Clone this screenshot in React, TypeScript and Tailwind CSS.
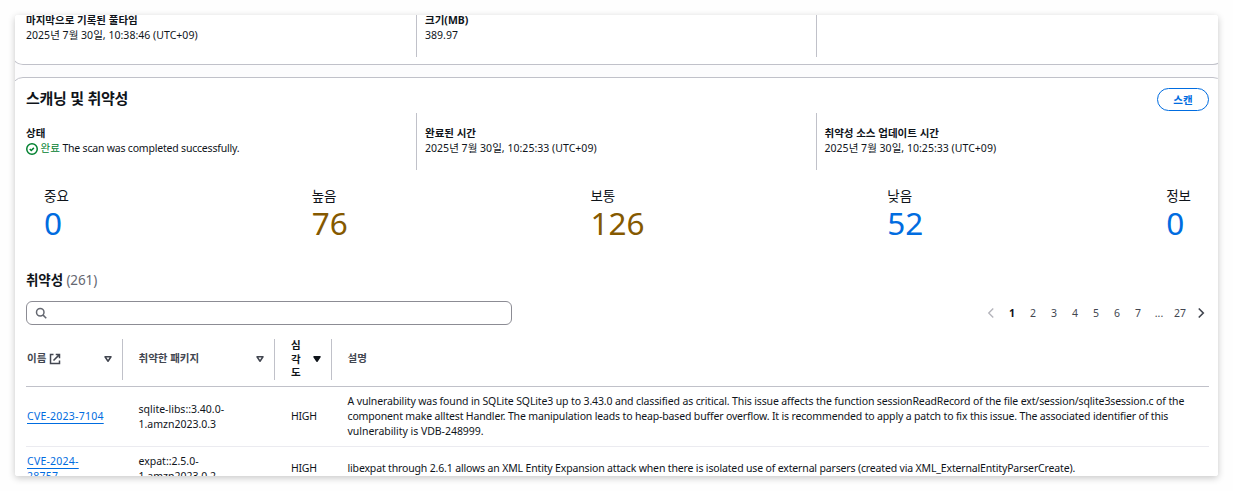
import type { ReactNode } from "react";

function Field({ label, children }: { label: string; children?: ReactNode }) {
  return (
    <div>
      <div className="h-[15px] whitespace-nowrap font-bold">{label}</div>
      <div className="flex h-[15px] items-center whitespace-nowrap tracking-[0.03px]">{children}</div>
    </div>
  );
}

function Stat({ label, value, color }: { label: string; value: string; color: string }) {
  return (
    <div>
      <div className="h-[17px] text-[13.5px] leading-[17px]">{label}</div>
      <div className={`h-[38px] text-[31.5px] leading-[36px] ${color}`}>{value}</div>
    </div>
  );
}

function CheckIcon() {
  return (
    <svg width="12" height="12" viewBox="0 0 16 16" fill="none" stroke="#00802f" strokeWidth="2" className="mr-[2.5px] shrink-0">
      <circle cx="8" cy="8" r="7" />
      <path d="m5 8 2 2 3.5-3.5" />
    </svg>
  );
}

function SearchIcon() {
  return (
    <svg width="12" height="12" viewBox="0 0 16 16" fill="none" stroke="#656871" strokeWidth="2">
      <circle cx="7" cy="7" r="5" />
      <path d="m15 15-4.5-4.5" />
    </svg>
  );
}

function ExternalIcon() {
  return (
    <svg width="12" height="12" viewBox="0 0 16 16" fill="none" stroke="#424650" strokeWidth="2" className="ml-[3px]">
      <path d="M6 2H2v12h12v-4" />
      <path d="M9 2h5v5M6 10l7.5-7.5" />
    </svg>
  );
}

function Caret({ filled }: { filled?: boolean }) {
  return (
    <svg width="12" height="12" viewBox="0 0 16 16" fill={filled ? "#0f141a" : "none"} stroke={filled ? "#0f141a" : "#424650"} strokeWidth="2" strokeLinejoin="round">
      <path d="M4 5h8l-4 6z" />
    </svg>
  );
}

function Chevron({ left }: { left?: boolean }) {
  return (
    <svg width="12" height="12" viewBox="0 0 16 16" fill="none" stroke={left ? "#b4b4bb" : "#424650"} strokeWidth={left ? 1.8 : 2.2}>
      <path d={left ? "m11 2-6 6 6 6" : "m5 2 6 6-6 6"} />
    </svg>
  );
}

const link = "text-[#006ce0] tracking-[0.24px] underline decoration-1 underline-offset-[3px]";
const columns = "grid grid-cols-[97px_152px_57px_1fr]";

export default function App() {
  return (
    <div className="h-[491px] w-[1233px] overflow-hidden bg-[#fefefe] pl-[15px] pt-[15px] font-['Noto_Sans','Noto_Sans_CJK_KR',sans-serif] text-[10.5px] leading-[15px] text-[#0f141a]">
      <div className="h-[461px] w-[1203px] rounded-[3px] shadow-[0_2px_7px_rgba(0,0,0,0.22)]">
        <div className="h-full overflow-hidden rounded-[3px] bg-[#fcfcfd]">
          <section className="-ml-1 -mr-[7px] h-[50px] rounded-b-xl border border-t-0 border-[#c0c1c9] bg-white pl-[14px] pr-[15px]">
            <div className="grid h-[42px] grid-cols-[390px_400px_1fr]">
              <div className="-mt-[2px]">
                <Field label="마지막으로 기록된 풀타임">2025년 7월 30일, 10:38:46 (UTC+09)</Field>
              </div>
              <div className="border-l border-[#c0c1c9] pl-2">
                <div className="-mt-[2px]">
                  <Field label="크기(MB)">389.97</Field>
                </div>
              </div>
              <div className="border-l border-[#c0c1c9]" />
            </div>
          </section>

          <section className="-ml-1 -mr-[7px] mt-3 h-[420px] rounded-t-xl border border-[#c0c1c9] bg-white pl-[14px] pr-[15px]">
            <header className="flex h-[35px] items-start justify-between pt-[10px]">
              <h2 className="text-[15px] font-bold leading-[20px] tracking-[-0.25px]">스캐닝 및 취약성</h2>
              <button className="h-[23px] w-[52px] rounded-full border border-[#006ce0] font-bold leading-[20px] text-[#006ce0]">
                스캔
              </button>
            </header>

            <div className="grid h-[57px] grid-cols-[390px_400px_1fr]">
              <div className="pt-[13px]">
                <Field label="상태">
                  <CheckIcon />
                  <span className="mr-[2.5px] text-[#00802f]">완료</span>
                  <span className="tracking-[-0.2px]">The scan was completed successfully.</span>
                </Field>
              </div>
              <div className="border-l border-[#c0c1c9] pl-2 pt-[13px]">
                <Field label="완료된 시간">2025년 7월 30일, 10:25:33 (UTC+09)</Field>
              </div>
              <div className="border-l border-[#c0c1c9] pl-[7.5px] pt-[13px]">
                <Field label="취약성 소스 업데이트 시간">2025년 7월 30일, 10:25:33 (UTC+09)</Field>
              </div>
            </div>

            <div className="flex justify-between pl-[18px] pr-[18px] pt-[18px]">
              <Stat label="중요" value="0" color="text-[#006ce0]" />
              <Stat label="높음" value="76" color="text-[#855900]" />
              <Stat label="보통" value="126" color="text-[#855900]" />
              <Stat label="낮음" value="52" color="text-[#006ce0]" />
              <Stat label="정보" value="0" color="text-[#006ce0]" />
            </div>

            <h3 className="mt-[27px] h-5 text-[13.5px] font-bold leading-5 tracking-[-0.1px]">
              취약성 <span className="font-normal text-[#656871]">(261)</span>
            </h3>

            <div className="mt-[11px] flex h-6 items-center justify-between">
              <div className="flex h-6 w-[486px] items-center rounded-md border border-[#8c8c94] pl-2">
                <SearchIcon />
              </div>
              <nav className="flex items-center pr-[2px] text-[#424650]">
                <Chevron left />
                <div className="ml-[4.5px] mr-[4.5px] flex text-center">
                  <span className="w-[21px] font-bold text-[#0f141a]">1</span>
                  <span className="w-[21px]">2</span>
                  <span className="w-[21px]">3</span>
                  <span className="w-[21px]">4</span>
                  <span className="w-[21px]">5</span>
                  <span className="w-[21px]">6</span>
                  <span className="w-[21px]">7</span>
                  <span className="w-[21px]">...</span>
                  <span className="w-[21px]">27</span>
                </div>
                <Chevron />
              </nav>
            </div>

            <div>
              <div className={`${columns} h-[62px] border-b border-[#c0c1c9] pb-[7px] pt-[14px] font-bold leading-[13.5px] text-[#424650]`}>
                <div className="flex items-center justify-between border-r border-[#c0c1c9] pl-px pr-2">
                  <span className="flex items-center">
                    <span className="pb-px">이름</span>
                    <ExternalIcon />
                  </span>
                  <Caret />
                </div>
                <div className="flex items-center justify-between border-r border-[#c0c1c9] pl-[15.5px] pr-2">
                  <span className="pb-[2px]">취약한 패키지</span>
                  <Caret />
                </div>
                <div className="flex items-center justify-between border-r border-[#c0c1c9] pl-4 pr-2 text-[#0f141a]">
                  <span className="w-[10px] break-all">심각도</span>
                  <Caret filled />
                </div>
                <div className="flex items-center pb-[2px] pl-[15.5px]">설명</div>
              </div>

              <div className={`${columns} h-[60px] items-center whitespace-nowrap border-b border-[#ebebf0]`}>
                <div className="pl-px">
                  <a className={link}>CVE-2023-7104</a>
                </div>
                <div className="pl-[15.5px]">
                  sqlite-libs::3.40.0-
                  <br />
                  1.amzn2023.0.3
                </div>
                <div className="pl-4 tracking-[-0.25px]">HIGH</div>
                <div className="pl-[15.5px]">
                  <div className="tracking-[-0.132px]">A vulnerability was found in SQLite SQLite3 up to 3.43.0 and classified as critical. This issue affects the function sessionReadRecord of the file ext/session/sqlite3session.c of the</div>
                  <div className="tracking-[-0.157px]">component make alltest Handler. The manipulation leads to heap-based buffer overflow. It is recommended to apply a patch to fix this issue. The associated identifier of this</div>
                  <div className="tracking-[-0.03px]">vulnerability is VDB-248999.</div>
                </div>
              </div>

              <div className={`${columns} h-[44px] items-center whitespace-nowrap`}>
                <div className="pl-px">
                  <a className={link}>
                    CVE-2024-
                    <br />
                    28757
                  </a>
                </div>
                <div className="pl-[15.5px]">
                  expat::2.5.0-
                  <br />
                  1.amzn2023.0.2
                </div>
                <div className="pb-[2px] pl-4 tracking-[-0.25px]">HIGH</div>
                <div className="pb-[2px] pl-[15.5px] tracking-[-0.157px]">libexpat through 2.6.1 allows an XML Entity Expansion attack when there is isolated use of external parsers (created via XML_ExternalEntityParserCreate).</div>
              </div>
            </div>
          </section>
        </div>
      </div>
    </div>
  );
}
